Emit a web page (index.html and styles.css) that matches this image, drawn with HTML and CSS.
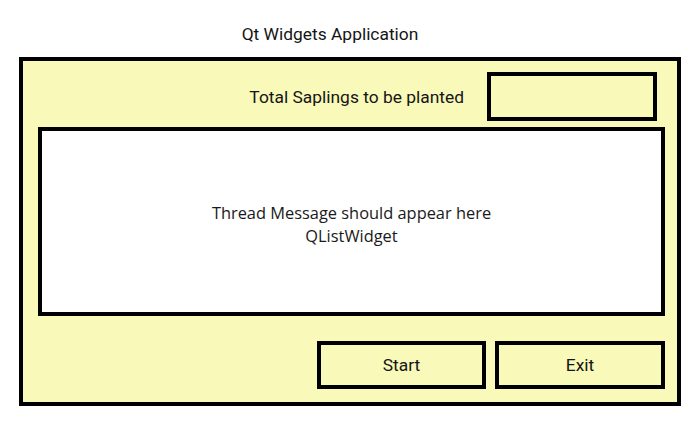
FILE: index.html
```html
<!DOCTYPE html>
<html lang="en">
<head>
<meta charset="utf-8">
<title>Qt Widgets Application</title>
<link rel="stylesheet" href="styles.css">
</head>
<body>
  <div class="title">Qt Widgets Application</div>
  <div class="window">
    <div class="top-row">
      <span class="label">Total Saplings to be planted</span>
      <div class="textbox"></div>
    </div>
    <div class="list">
      <p>Thread Message should appear here<br>QListWidget</p>
    </div>
    <div class="buttons">
      <div class="btn">Start</div>
      <div class="btn btn-exit">Exit</div>
    </div>
  </div>
</body>
</html>
```

FILE: styles.css
```css
html, body {
  margin: 0;
  padding: 0;
  background: #ffffff;
}

body {
  width: 691px;
  height: 427px;
  font-family: Roboto, "Liberation Sans", sans-serif;
  color: #151515;
  overflow: hidden;
}

.title {
  height: 57px;
  box-sizing: border-box;
  padding-top: 24px;
  padding-right: 31px;
  text-align: center;
  font-size: 17.4px;
  line-height: 21px;
}

.window {
  margin-left: 19px;
  width: 662px;
  height: 349px;
  box-sizing: border-box;
  border: 4px solid #000;
  background: #f9f9b9;
  padding: 11px 12px 13px 15px;
  display: flex;
  flex-direction: column;
}

.top-row {
  display: flex;
  justify-content: flex-end;
  align-items: center;
  gap: 23px;
  padding-right: 8px;
  height: 49px;
}

.label {
  font-size: 17.4px;
  line-height: 21px;
  padding-top: 1px;
}

.textbox {
  width: 170px;
  height: 49px;
  box-sizing: border-box;
  border: 4px solid #000;
}

.list {
  margin-top: 6px;
  height: 189px;
  box-sizing: border-box;
  border: 4px solid #000;
  background: #ffffff;
  display: flex;
  align-items: center;
  justify-content: center;
}

.list p {
  margin: 0;
  text-align: center;
  font-family: "Open Sans", "Liberation Sans", sans-serif;
  font-size: 16.4px;
  line-height: 23px;
  padding-top: 4px;
  color: #1a1a1a;
}

.buttons {
  margin-top: 25px;
  display: flex;
  justify-content: flex-end;
  gap: 9px;
}

.btn {
  width: 169px;
  height: 48px;
  box-sizing: border-box;
  border: 4px solid #000;
  display: flex;
  align-items: center;
  justify-content: center;
  font-size: 17.4px;
}

.btn-exit {
  width: 170px;
}
```
